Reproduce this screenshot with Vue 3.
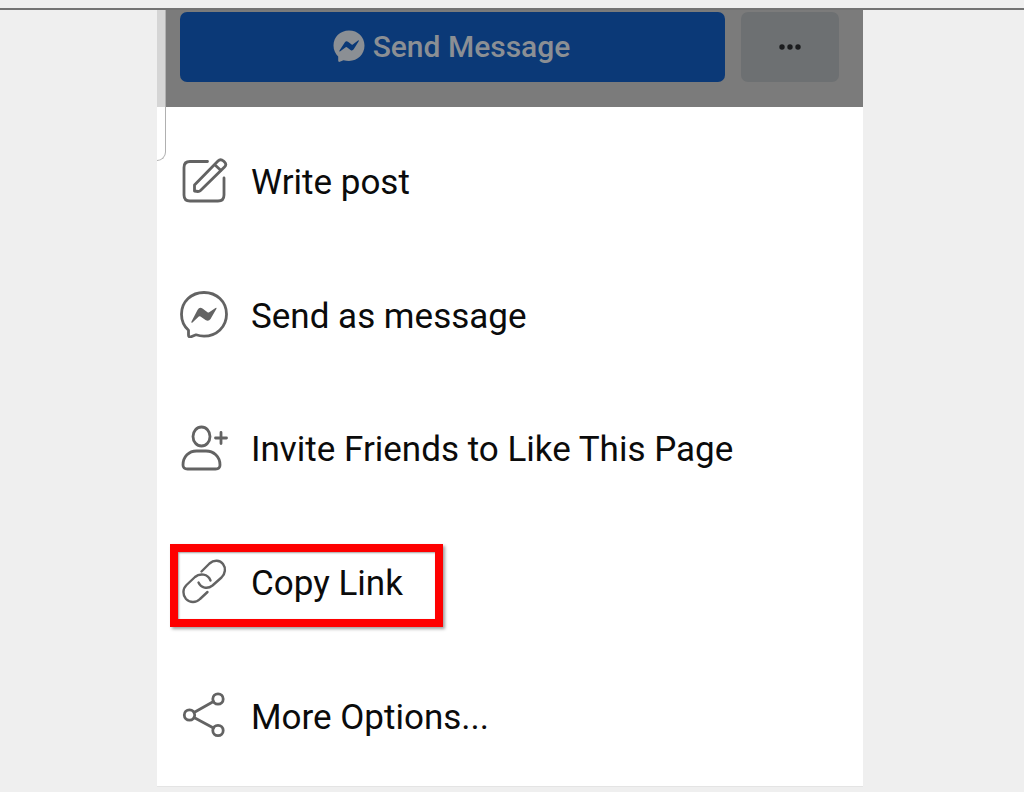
<script setup>
const items = [
  { id: 'write', label: 'Write post' },
  { id: 'message', label: 'Send as message' },
  { id: 'invite', label: 'Invite Friends to Like This Page' },
  { id: 'copy', label: 'Copy Link', marked: true },
  { id: 'more', label: 'More Options...' },
]
</script>

<template>
  <div class="page">
    <div class="top-strip"></div>
    <main class="stage">
      <section class="sheet">
        <div class="edge" aria-hidden="true"></div>
        <header class="actions">
          <button class="send" type="button">
            <svg class="send-icon" viewBox="0 0 32 32" aria-hidden="true">
              <path d="M16 0.5C7.2 0.5 0.5 7 0.5 15.6c0 4.4 1.8 8.2 4.700 10.9v4.2c0 .9.8 1.4 1.6 1.1l3.700-1.6c1.700.5 3.600.7 5.500.7 8.800 0 15.500-6.500 15.500-15.300S24.800.5 16 .5z" fill="#8b8f94" />
              <path d="M6.500 20.500l5.400-8.300q1.300-1.800 3.100-.5l3.600 2.800q.6.400 1.200 0l5.200-3.900q1.400-.8.700.7l-5 8q-1.400 1.900-3.200.6l-3.600-2.700q-.6-.4-1.200 0l-5.400 4.100q-1.400.8-.8-.8z" fill="#0b3977" />
            </svg>
            <span>Send Message</span>
          </button>
          <button class="dots" type="button" aria-label="More">
            <svg class="dots-icon" viewBox="0 0 24 8" aria-hidden="true">
              <circle cx="4" cy="4" r="2.700" /><circle cx="12" cy="4" r="2.700" /><circle cx="20" cy="4" r="2.700" />
            </svg>
          </button>
        </header>
        <ul class="menu">
          <li v-for="item in items" :key="item.id" class="row">
            <button class="item" type="button">
              <svg class="icon" viewBox="0 0 48 48" stroke-width="2.800" aria-hidden="true">
                <g v-if="item.id === 'write'">
                  <path d="M27.500 4.500H10Q4 4.500 4 10.500V38Q4 44 10 44H38Q44 44 44 38V21" />
                  <path d="M14.500 34V28L38 4Q40.500 1.500 43.500 4L44.500 5Q47 7.500 44.500 10L20.500 33.500Q19.500 34.500 18 34.500ZM34.500 7.500L41 13.500" />
                </g>
                <g v-else-if="item.id === 'message'">
                  <path d="M24 2.500C11.500 2.500 1.500 11.500 1.500 24.300C1.500 31 4 36.300 8.500 40.300V45Q8.500 47.500 11 46.800L16 44.800Q20 46.200 24 46.200C36.500 46.200 46.500 37 46.500 24.300C46.500 11.500 36.500 2.500 24 2.500Z" />
                  <path class="solid" d="M11.500 31.500L17.500 20Q19.500 16.500 22.500 18.500L27.500 22.300Q28.300 22.800 29.200 22.300L35.500 18Q37.200 17.300 36.300 19L30.500 29Q28.500 32 25.500 30L20.500 26.500Q19.700 26 18.800 26.500L12.500 32.500Q10.800 33.200 11.500 31.500Z" />
                </g>
                <g v-else-if="item.id === 'invite'">
                  <ellipse cx="21.500" cy="12.500" rx="8.500" ry="9.500" />
                  <path d="M3 41C3 32.500 9 27 16.500 27H26C33.500 27 40 32.500 40 41Q40 45 35.500 45H7.500Q3 45 3 41Z" />
                  <path d="M41 8.500V19.500M35.500 14H46.500" />
                </g>
                <g v-else-if="item.id === 'copy'" stroke-width="2.400">
                  <path d="M21.500 13.500L29.500 5.500C34 1.500 40 2 43 6C46 10 45.500 15.500 41.500 19.500L32.500 27.500C27.500 31.500 21 30 18.500 24.500" />
                  <path d="M30.500 22.500C28 15.500 19.500 15 15 19L6.500 27C2.500 31 2.500 37 6 41C10 45 16 45 20 41L27.500 34" />
                </g>
                <g v-else>
                  <circle cx="9.500" cy="24" r="5.200" />
                  <circle cx="38" cy="8" r="5.200" />
                  <circle cx="38" cy="39.500" r="5.200" />
                  <path d="M14 21.500L33.500 10.500M14 26.500L33.500 37" />
                </g>
              </svg>
              <span class="label">{{ item.label }}</span>
            </button>
            <span v-if="item.marked" class="marker" aria-hidden="true"></span>
          </li>
        </ul>
      </section>
    </main>
  </div>
</template>

<style>
body {
  margin: 0;
  background: #efefef;
}
</style>

<style scoped>
.page {
  min-height: 100vh;
  box-sizing: border-box;
  background: #efefef;
  font-family: Roboto, "Liberation Sans", sans-serif;
  color: #0b0b0b;
}
.top-strip {
  height: 8px;
  border-bottom: 2px solid #737373;
}
.stage {
  display: grid;
  grid-template-columns: 157fr 706fr 161fr;
}
.sheet {
  grid-column: 2;
  position: relative;
  background: #fff;
  border-bottom: 1px solid #e4e4e4;
}
.edge {
  position: absolute;
  left: 0;
  top: 0;
  width: 8px;
  height: 150px;
  border-right: 1px solid #b0b0b0;
  border-bottom: 1px solid #b0b0b0;
  border-bottom-right-radius: 10px;
}
.actions {
  display: flex;
  gap: 16px;
  padding: 2px 24px 25px 14px;
  border-left: 9px solid #d5d5d5;
  background: #7b7b7b;
  background-clip: padding-box;
}
button {
  border: 0;
  margin: 0;
  font-family: inherit;
  cursor: pointer;
}
.send,
.dots {
  display: flex;
  align-items: center;
  justify-content: center;
  height: 70px;
  border-radius: 7px;
}
.send {
  flex: 1;
  gap: 8px;
  padding: 0 2px 2px 0;
  background: #0b3977;
  color: #8b8f94;
  font-size: 30px;
  font-weight: 500;
}
.send-icon {
  width: 32px;
  height: 32px;
}
.dots {
  width: 98px;
  padding: 0;
  background: #6d7072;
}
.dots-icon {
  width: 24px;
  height: 8px;
  fill: #1b1c1e;
}
.menu {
  display: grid;
  grid-template-rows: repeat(5, 1fr);
  min-height: 668px;
  margin: 0;
  padding: 7px 0 4px;
  list-style: none;
}
.row {
  position: relative;
  display: flex;
}
.item {
  display: flex;
  flex: 1;
  align-items: center;
  gap: 23px;
  padding: 0 23px;
  background: transparent;
  color: inherit;
  font-size: 35px;
  text-align: left;
}
.label {
  padding-top: 4px;
}
.icon {
  width: 48px;
  height: 48px;
  fill: none;
  stroke: #636363;
  stroke-linecap: round;
  stroke-linejoin: round;
}
.icon .solid {
  fill: #636363;
  stroke: none;
}
.marker {
  position: absolute;
  left: 13px;
  top: 29px;
  width: 257px;
  height: 67px;
  border: 8px solid #fe0000;
  box-shadow: 2px 2px 3px #00000060, inset 1px 1px 2px #00000060;
  pointer-events: none;
}
</style>
